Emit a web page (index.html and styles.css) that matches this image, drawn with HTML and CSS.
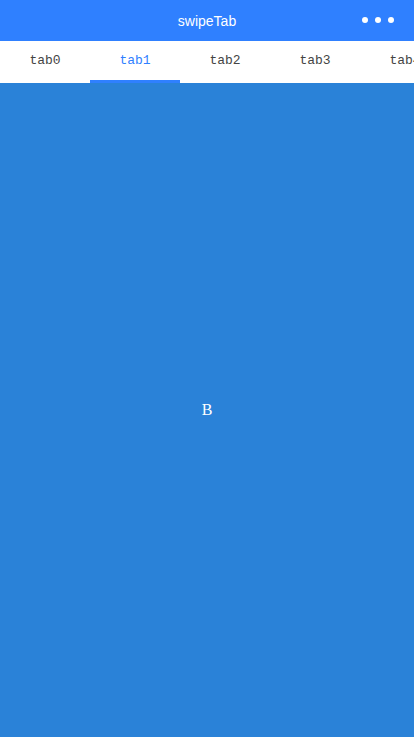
FILE: index.html
```html
<!DOCTYPE html>
<html>
<head>
<meta charset="utf-8">
<link rel="stylesheet" href="styles.css">
</head>
<body>
<div class="page">
  <header class="navbar">
    <span class="title">swipeTab</span>
    <div class="more">
      <span class="dot"></span><span class="dot"></span><span class="dot"></span>
    </div>
  </header>
  <nav class="tabs">
    <div class="tab">tab0</div>
    <div class="tab active">tab1</div>
    <div class="tab">tab2</div>
    <div class="tab">tab3</div>
    <div class="tab">tab4</div>
  </nav>
  <main class="content">
    <span class="letter">B</span>
  </main>
</div>
</body>
</html>
```
FILE: styles.css
```css
html, body {
  margin: 0;
  padding: 0;
  width: 414px;
  height: 737px;
  overflow: hidden;
}
.page {
  display: flex;
  flex-direction: column;
  height: 737px;
}
.navbar {
  position: relative;
  height: 41px;
  background: #2f80ff;
  display: flex;
  align-items: center;
  justify-content: center;
  flex-shrink: 0;
}
.title {
  color: #fff;
  font-family: "Liberation Sans", Arial, sans-serif;
  font-size: 14px;
}
.more {
  position: absolute;
  right: 20px;
  top: 17px;
  display: flex;
  gap: 7px;
}
.dot {
  width: 6px;
  height: 6px;
  border-radius: 50%;
  background: #fff;
}
.tabs {
  display: flex;
  height: 42px;
  background: #fff;
  flex-shrink: 0;
  overflow: hidden;
}
.tab {
  flex: 0 0 90px;
  box-sizing: border-box;
  height: 42px;
  display: flex;
  align-items: center;
  justify-content: center;
  font-family: "Liberation Mono", "DejaVu Sans Mono", monospace;
  font-size: 13px;
  color: #444;
  border-bottom: 3px solid transparent;
}
.tab.active {
  color: #2f80ff;
  border-bottom-color: #2f80ff;
}
.content {
  flex: 1;
  background: #2a82d8;
  display: flex;
  align-items: center;
  justify-content: center;
}
.letter {
  color: #fff;
  font-family: "Liberation Serif", "Times New Roman", serif;
  font-size: 16px;
}
```
